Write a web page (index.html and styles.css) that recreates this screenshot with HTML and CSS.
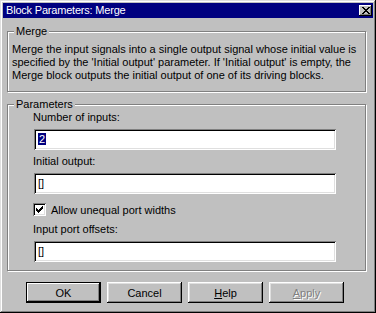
FILE: index.html
```html
<!DOCTYPE html>
<html lang="en">
<head>
    <meta charset="UTF-8">
    <title>Block Parameters: Merge</title>
    <link rel="stylesheet" href="styles.css">
</head>
<body>
    <div class="window">
        <div class="titlebar">
            <span class="title">Block Parameters: Merge</span>
            <span class="close">
                <svg width="8" height="7" viewBox="0 0 8 7">
                    <path d="M0 0h2v1h-2zM6 0h2v1h-2zM1 1h2v1h-2zM5 1h2v1h-2zM2 2h4v1h-4zM3 3h2v1h-2zM2 4h4v1h-4zM1 5h2v1h-2zM5 5h2v1h-2zM0 6h2v1h-2zM6 6h2v1h-2z" fill="#000"/>
                </svg>
            </span>
        </div>

        <div class="content">
            <fieldset class="group">
                <legend>Merge</legend>
                <p class="desc">Merge the input signals into a single output signal whose initial value is specified by the 'Initial output' parameter. If 'Initial output' is empty, the Merge block outputs the initial output of one of its driving blocks.</p>
            </fieldset>

            <fieldset class="group params">
                <legend>Parameters</legend>
                <div class="param-body">
                    <div class="field-label">Number of inputs:</div>
                    <div class="field"><span class="sel">2</span></div>

                    <div class="field-label">Initial output:</div>
                    <div class="field">[]</div>

                    <div class="check-row">
                        <span class="checkbox">
                            <svg width="7" height="7" viewBox="0 0 7 7">
                                <path d="M6 0h1v3h-1zM5 1h1v3h-1zM4 2h1v3h-1zM3 3h1v3h-1zM2 4h1v3h-1zM1 3h1v3h-1zM0 2h1v3h-1z" fill="#000"/>
                            </svg>
                        </span>
                        <span>Allow unequal port widths</span>
                    </div>

                    <div class="field-label">Input port offsets:</div>
                    <div class="field last">[]</div>
                </div>
            </fieldset>

            <div class="buttons">
                <button class="btn default">OK</button>
                <button class="btn">Cancel</button>
                <button class="btn"><u>H</u>elp</button>
                <button class="btn disabled"><u>A</u>pply</button>
            </div>
        </div>
    </div>
</body>
</html>
```

FILE: styles.css
```css
* {
    box-sizing: border-box;
}
body {
    margin: 0;
    font-family: "Liberation Sans", Arial, sans-serif;
    font-size: 11px;
    color: #000;
}
.window {
    width: 376px;
    height: 313px;
    background-color: #c0c0c0;
    padding: 3px;
    box-shadow: inset -1px -1px #000, inset 1px 1px #dfdfdf, inset -2px -2px #808080, inset 2px 2px #fff;
}
.titlebar {
    height: 15px;
    line-height: 15px;
    background-color: #000080;
    color: #fff;
    display: flex;
    align-items: center;
    justify-content: space-between;
    padding: 0 1px 0 3px;
}
.title {
    letter-spacing: -0.2px;
}
.close {
    width: 13px;
    height: 11px;
    background-color: #c0c0c0;
    display: flex;
    align-items: center;
    justify-content: center;
    box-shadow: inset -1px -1px #000, inset 1px 1px #fff, inset -2px -2px #808080;
}
.close svg {
    display: block;
    margin-top: -1px;
}
.content {
    padding: 7px 7px 0 4px;
}
.group {
    margin: 0;
    padding: 5px 4px 9px 6px;
    border: 1px solid #808080;
    box-shadow: 1px 1px 0 #fff, inset 1px 1px 0 #fff;
    min-width: 0;
}
.group legend {
    padding: 0 2px;
    line-height: 13px;
    background-color: #c0c0c0;
}
.desc {
    margin: 0 0 0 -2px;
    line-height: 13px;
}
.params {
    margin-top: 6px;
    padding: 0 29px 8px 6px;
}
.param-body {
    padding-left: 19px;
}
.field-label {
    line-height: 13px;
    margin-bottom: 5px;
}
.field {
    height: 21px;
    margin: 0 0 5px 1px;
    background-color: #fff;
    padding: 3px 4px;
    line-height: 15px;
    box-shadow: inset 1px 1px #808080, inset -1px -1px #fff, inset 2px 2px #000, inset -2px -2px #dfdfdf;
}
.field.last {
    margin-bottom: 0;
}
.sel {
    background-color: #000080;
    color: #fff;
    padding: 0 1px;
}
.check-row {
    display: flex;
    align-items: center;
    gap: 5px;
    height: 13px;
    margin: 9px 0 7px;
}
.checkbox {
    width: 13px;
    height: 13px;
    background-color: #fff;
    display: flex;
    align-items: center;
    justify-content: center;
    box-shadow: inset 1px 1px #808080, inset -1px -1px #fff, inset 2px 2px #000, inset -2px -2px #dfdfdf;
}
.buttons {
    display: flex;
    justify-content: center;
    gap: 6px;
    margin: 11px 3px 0 0;
}
.btn {
    width: 75px;
    height: 21px;
    border: none;
    padding: 0;
    font-family: inherit;
    font-size: 11px;
    color: #000;
    background-color: #c0c0c0;
    box-shadow: inset -1px -1px #000, inset 1px 1px #fff, inset -2px -2px #808080, inset 2px 2px #dfdfdf;
}
.btn.default {
    box-shadow: inset 0 0 0 1px #000, inset -2px -2px #000, inset 2px 2px #fff, inset -3px -3px #808080;
}
.btn.disabled {
    color: #808080;
    text-shadow: 1px 1px 0 #fff;
}
```
